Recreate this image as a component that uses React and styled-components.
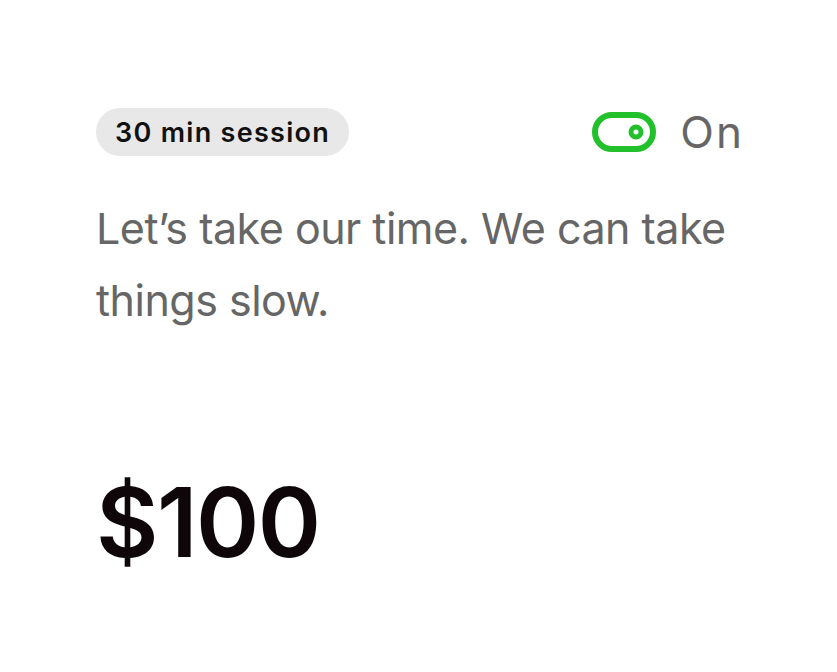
import React from "react";
import styled, { createGlobalStyle } from "styled-components";

const Global = createGlobalStyle`
  html, body { margin: 0; padding: 0; background: #fff; }
  body { font-family: Inter, "Noto Sans", sans-serif; }
`;

const Card = styled.div`
  width: 837px;
  height: 672px;
  box-sizing: border-box;
  padding: 108px 95px 0 96px;
  display: flex;
  flex-direction: column;
`;

const Header = styled.div`
  display: flex;
  align-items: center;
  justify-content: space-between;
  height: 48px;
`;

const Pill = styled.span`
  display: inline-flex;
  align-items: center;
  height: 48px;
  padding: 0 19px;
  border-radius: 24px;
  background: #e8e8e8;
  color: #111;
  font-size: 27px;
  font-weight: 600;
  letter-spacing: 1.3px;
`;

const ToggleWrap = styled.div`
  display: flex;
  align-items: center;
  gap: 24px;
`;

const ToggleLabel = styled.span`
  font-size: 44px;
  color: #666;
  font-weight: 400;
  letter-spacing: 2px;
  margin-right: -2px;
`;

const Description = styled.p`
  margin: 36px 0 0;
  font-size: 43px;
  line-height: 72px;
  color: #666;
  letter-spacing: -0.5px;
`;

const Price = styled.div`
  margin-top: 138px;
  font-size: 96px;
  font-weight: 600;
  color: #0e0609;
  letter-spacing: -1.5px;
  line-height: 1;
`;

function ToggleIcon() {
  return (
    <svg width="64" height="40" viewBox="0 0 64 40" fill="none">
      <rect x="3" y="3" width="58" height="34" rx="17" stroke="#22c02a" strokeWidth="6" />
      <circle cx="44" cy="20" r="5" stroke="#22c02a" strokeWidth="5" />
    </svg>
  );
}

export default function App() {
  return (
    <>
      <Global />
      <Card>
        <Header>
          <Pill>30 min session</Pill>
          <ToggleWrap>
            <ToggleIcon />
            <ToggleLabel>On</ToggleLabel>
          </ToggleWrap>
        </Header>
        <Description>Let’s take our time. We can take things slow.</Description>
        <Price>$100</Price>
      </Card>
    </>
  );
}
